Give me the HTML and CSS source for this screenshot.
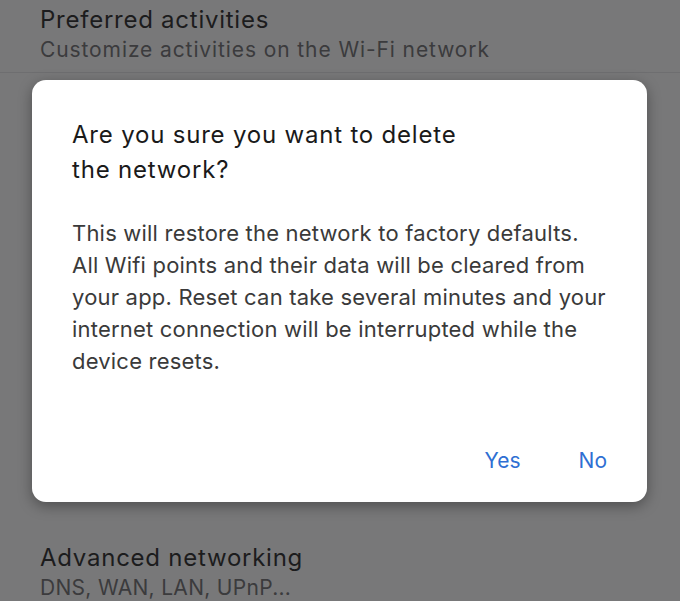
FILE: index.html
```html
<!DOCTYPE html>
<html lang="en">
<head>
<meta charset="utf-8">
<title>Delete network</title>
<link rel="stylesheet" href="styles.css">
</head>
<body>
<div class="screen">
  <ul class="settings">
    <li class="item item-top">
      <div class="item-title">Preferred activities</div>
      <div class="item-sub sub-long">Customize activities on the Wi-Fi network</div>
    </li>
    <li class="item item-hidden"></li>
    <li class="item item-bottom">
      <div class="item-title">Advanced networking</div>
      <div class="item-sub">DNS, WAN, LAN, UPnP...</div>
    </li>
  </ul>

  <div class="dialog" role="dialog">
    <h2 class="dialog-title">Are you sure you want to delete<br>the network?</h2>
    <p class="dialog-body">This will restore the network to factory defaults.<br>All Wifi points and their data will be cleared from<br>your app. Reset can take several minutes and your<br>internet connection will be interrupted while the<br>device resets.</p>
    <div class="dialog-actions">
      <button class="btn">Yes</button>
      <button class="btn">No</button>
    </div>
  </div>
</div>
</body>
</html>
```

FILE: styles.css
```css
* { box-sizing: border-box; }
html, body {
  margin: 0;
  padding: 0;
}
body {
  width: 680px;
  height: 601px;
  overflow: hidden;
  background: #787879;
  font-family: Inter, Roboto, "Noto Sans", sans-serif;
}
.screen {
  position: relative;
  width: 680px;
  height: 601px;
}
.settings {
  list-style: none;
  margin: 0;
  padding: 0;
}
.item {
  padding: 0 40px;
}
.item-top {
  padding-top: 5px;
  height: 73px;
  border-bottom: 1px solid #6e6e70;
}
.item-hidden {
  height: 470px;
}
.item-title {
  font-size: 24px;
  line-height: 30px;
  letter-spacing: 0.75px;
  color: #1c1c1d;
}
.item-sub {
  font-size: 21px;
  line-height: 30px;
  letter-spacing: 0.3px;
  color: #3b3b3d;
}
.sub-long {
  letter-spacing: 0.9px;
}
.dialog {
  position: absolute;
  left: 32px;
  top: 80px;
  width: 615px;
  height: 422px;
  background: #ffffff;
  border-radius: 14px;
  box-shadow: 0 4px 14px rgba(0, 0, 0, 0.35);
  padding: 37px 40px 0 40px;
  display: flex;
  flex-direction: column;
}
.dialog-title {
  margin: 0;
  font-weight: 400;
  font-size: 24px;
  line-height: 35px;
  letter-spacing: 0.8px;
  color: #1a1a1a;
}
.dialog-body {
  margin: 30px 0 0 0;
  font-size: 22px;
  line-height: 32px;
  letter-spacing: 0.2px;
  color: #3a3a3a;
  white-space: nowrap;
}
.dialog-actions {
  margin-top: auto;
  margin-bottom: 26px;
  display: flex;
  justify-content: flex-end;
  gap: 58px;
}
.btn {
  background: none;
  border: 0;
  padding: 0;
  font-family: Inter, Roboto, "Noto Sans", sans-serif;
  font-size: 21px;
  line-height: 30px;
  color: #2f6fd3;
  font-weight: 400;
}
```
